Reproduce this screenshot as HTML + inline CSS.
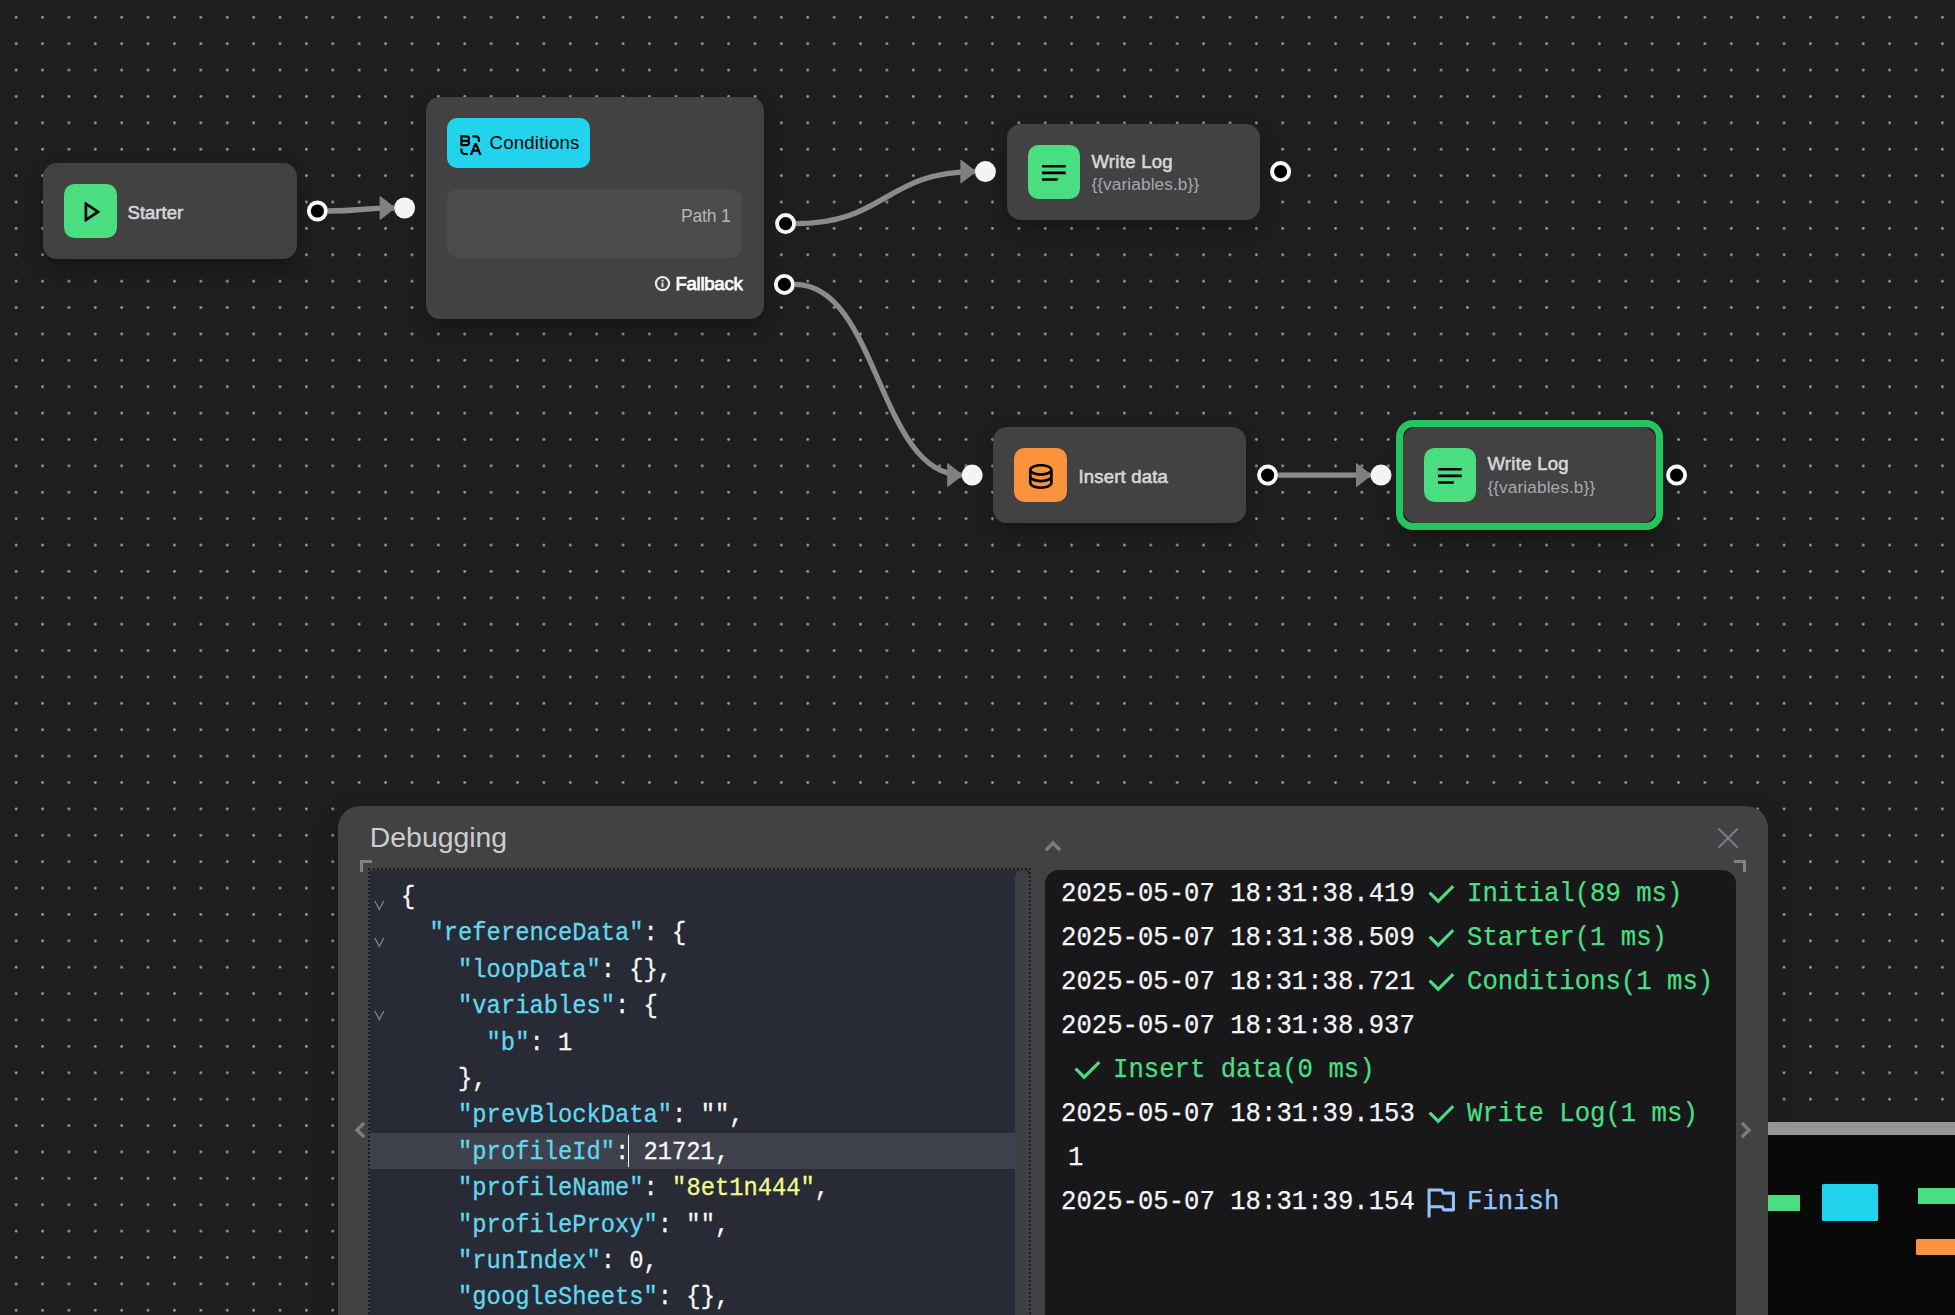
<!DOCTYPE html>
<html>
<head>
<meta charset="utf-8">
<title>Workflow Debugging</title>
<style>
*{box-sizing:border-box;margin:0;padding:0}
html,body{width:1955px;height:1315px;overflow:hidden;background:#1e1e1e;font-family:"Liberation Sans",sans-serif;}
#stage{position:absolute;left:0;top:0;width:1955px;height:1315px;overflow:hidden;background:#1e1e1e}
#bg{position:absolute;left:0;top:0}
.node{position:absolute;background:#424242;border-radius:14px;box-shadow:0 8px 18px rgba(0,0,0,.28)}
.ibox{position:absolute;border-radius:10.5px;width:52.8px;height:54px}
.ibox svg{position:absolute;left:10.6px;top:12px;width:31.7px;height:31.7px}
.ttl{position:absolute;white-space:nowrap;font-size:18.5px;line-height:22px;color:#d6d6d9;-webkit-text-stroke:.6px #d6d6d9}
.sub{position:absolute;white-space:nowrap;font-size:17.2px;line-height:22px;color:#a3a9b3}
.abs{position:absolute}
/* panel */
#panel{position:absolute;left:338px;top:806px;width:1430px;height:560px;background:#424242;border-radius:22px;box-shadow:0 6px 24px rgba(0,0,0,.22)}
#editor{position:absolute;left:368px;top:868px;width:663px;height:470px;border:2px dotted #1d1d1e;background:#282a36;background-clip:padding-box;overflow:hidden}
.cl{position:absolute;left:31.2px;-webkit-text-stroke:.3px;white-space:pre;font-family:"Liberation Mono",monospace;font-size:25px;line-height:36.4px;height:36.4px;color:#f8f8f2;transform:scaleX(.951);transform-origin:0 0}
.k{color:#62d8ee}.s{color:#f1fa8c}

#logs{position:absolute;left:1045px;top:870px;width:691px;height:470px;background:#18181b;border-radius:14px 14px 0 0;overflow:hidden}
.ll{position:absolute;white-space:pre;-webkit-text-stroke:.25px;font-family:"Liberation Mono",monospace;font-size:27.4px;line-height:44px;height:44px;color:#f4f4f5;transform:scaleX(.936);transform-origin:0 0}
.g{color:#4ade80}.b{color:#93c5fd}
</style>
</head>
<body>
<div id="stage">
<svg id="bg" width="1955" height="1315" viewBox="0 0 1955 1315">
<defs><pattern id="dots" x="2.956" y="4.157" width="26.387" height="26.387" patternUnits="userSpaceOnUse"><circle cx="13.194" cy="13.194" r="1.35" fill="#9c9ca6"/></pattern></defs>
<rect width="1955" height="1315" fill="#1e1e1e"/><rect width="1955" height="1315" fill="url(#dots)"/>
<path d="M327.9,211.0 C361.0,211.0 361.0,208.0 394.1,208.0" fill="none" stroke="#8b8b8d" stroke-width="5.3"/>
<path d="M796.1,223.6 C885.5,223.6 885.5,171.6 974.9,171.6" fill="none" stroke="#8b8b8d" stroke-width="5.3"/>
<path d="M794.9,284.4 C878.3,284.4 878.3,475.1 961.7,475.1" fill="none" stroke="#8b8b8d" stroke-width="5.3"/>
<path d="M1278.1,475.1 C1324.3,475.1 1324.3,475.1 1370.5,475.1" fill="none" stroke="#8b8b8d" stroke-width="5.3"/>
<path d="M380.1,196.5 L395.0,208.0 L380.1,219.5 Z" fill="#808080" stroke="#808080" stroke-width="1" stroke-linejoin="round"/>
<path d="M960.9,160.1 L975.8,171.6 L960.9,183.1 Z" fill="#808080" stroke="#808080" stroke-width="1" stroke-linejoin="round"/>
<path d="M947.7,463.6 L962.6,475.1 L947.7,486.6 Z" fill="#808080" stroke="#808080" stroke-width="1" stroke-linejoin="round"/>
<path d="M1356.5,463.6 L1371.4,475.1 L1356.5,486.6 Z" fill="#808080" stroke="#808080" stroke-width="1" stroke-linejoin="round"/>
</svg>

<!-- Starter -->
<div class="node" style="left:43px;top:163px;width:253.6px;height:96.4px">
  <div class="ibox" style="left:21px;top:21px;background:#4ade80"><svg style="left:10px;top:12.4px" viewBox="0 0 24 24"><path fill="#000" d="M16.394 12L10 7.737v8.526L16.394 12zm2.982.416L8.777 19.482A.5.5 0 0 1 8 19.066V4.934a.5.5 0 0 1 .777-.416l10.599 7.066a.5.5 0 0 1 0 .832z"/></svg></div>
  <div class="ttl" style="left:84.6px;top:38.6px">Starter</div>
</div>
<!-- Conditions -->
<div class="node" style="left:426px;top:97px;width:337.6px;height:221.6px">
  <div class="abs" style="left:21px;top:21px;width:143.2px;height:49.7px;border-radius:10px;background:#22d3ee">
    <svg class="abs" style="left:10.2px;top:14px;width:26.4px;height:26.4px" viewBox="0 0 24 24"><path fill="#000" d="M5 15v2a2 2 0 0 0 1.85 1.995L7 19h3v2H7a4 4 0 0 1-4-4v-2h2zm13-5l4.4 11h-2.155l-1.201-3h-4.09l-1.199 3h-2.154L16 10h2zm-1 2.885L15.753 16h2.492L17 12.885zM3 3h6a3 3 0 0 1 2.235 5A3 3 0 0 1 9 13H3V3zm6 6H5v2h4a1 1 0 0 0 0-2zm8-6a4 4 0 0 1 4 4v2h-2V7a2 2 0 0 0-2-2h-3V3h3zM9 5H5v2h4a1 1 0 1 0 0-2z"/></svg>
    <div class="abs" style="left:42.6px;top:14px;font-size:18.5px;line-height:22px;color:#000;white-space:nowrap;letter-spacing:.25px">Conditions</div>
  </div>
  <div class="abs" style="left:21px;top:92.4px;width:295px;height:68.6px;border-radius:10.5px;background:#4b4b4b">
    <div class="abs" style="right:11.4px;top:16.1px;font-size:17.6px;line-height:22px;letter-spacing:-.2px;color:#b3b3b8;white-space:nowrap">Path 1</div>
  </div>
  <svg class="abs" style="left:228px;top:178px;width:17px;height:17px" viewBox="0 0 17 17"><circle cx="8.5" cy="8.6" r="6.6" fill="none" stroke="#ececee" stroke-width="2.2"/><rect x="7.5" y="7.6" width="2" height="4.6" fill="#e4e4e7"/><rect x="7.5" y="4.7" width="2" height="1.9" fill="#e4e4e7"/></svg>
  <div class="abs" style="right:21.2px;top:175.9px;font-size:18.5px;line-height:22px;color:#fff;letter-spacing:-.25px;-webkit-text-stroke:.75px #fff;white-space:nowrap">Fallback</div>
</div>
<!-- Write Log 1 -->
<div class="node" style="left:1006.6px;top:123.6px;width:253px;height:96px">
  <div class="ibox" style="left:21px;top:21px;background:#4ade80"><svg viewBox="0 0 24 24"><path fill="#000" d="M3 18h12v-2H3v2zM3 6v2h18V6H3zm0 7h18v-2H3v2z"/></svg></div>
  <div class="ttl" style="left:84.8px;top:27.1px;letter-spacing:.3px">Write Log</div>
  <div class="sub" style="left:84.8px;top:49.5px;letter-spacing:.12px">{{variables.b}}</div>
</div>
<!-- Insert data -->
<div class="node" style="left:993.4px;top:427px;width:253px;height:96px">
  <div class="ibox" style="left:21px;top:21px;background:#fb923c"><svg viewBox="0 0 24 24"><path fill="#000" d="M5 12.5c0 .313.461.858 1.53 1.393C7.914 14.585 9.877 15 12 15c2.123 0 4.086-.415 5.47-1.107 1.069-.535 1.53-1.08 1.53-1.393v-2.171C17.35 11.349 14.827 12 12 12s-5.35-.652-7-1.671V12.5zm14 2.829C17.35 16.349 14.827 17 12 17s-5.35-.652-7-1.671V17.5c0 .313.461.858 1.53 1.393C7.914 19.585 9.877 20 12 20c2.123 0 4.086-.415 5.47-1.107 1.069-.535 1.53-1.08 1.53-1.393v-2.171zM3 17.5v-10C3 5.015 7.03 3 12 3s9 2.015 9 4.5v10c0 2.485-4.03 4.5-9 4.5s-9-2.015-9-4.5zm9-7.500c2.123 0 4.086-.415 5.47-1.107C18.539 8.358 19 7.813 19 7.5c0-.313-.461-.858-1.53-1.393C16.086 5.415 14.123 5 12 5c-2.123 0-4.086.415-5.47 1.107C5.461 6.642 5 7.187 5 7.5c0 .313.461.858 1.53 1.393C7.914 9.585 9.877 10 12 10z"/></svg></div>
  <div class="ttl" style="left:85px;top:39.2px;letter-spacing:.2px">Insert data</div>
</div>
<!-- Write Log 2 (active) -->
<div class="abs" style="left:1395.6px;top:420px;width:267px;height:110px;border:7px solid #22c55e;border-radius:17px;background:#1a1a1a;box-shadow:0 13px 20px -4px rgba(0,0,0,.3)"></div>
<div class="node" style="left:1402.6px;top:427px;width:253px;height:96px;box-shadow:none">
  <div class="ibox" style="left:21px;top:21px;background:#4ade80"><svg viewBox="0 0 24 24"><path fill="#000" d="M3 18h12v-2H3v2zM3 6v2h18V6H3zm0 7h18v-2H3v2z"/></svg></div>
  <div class="ttl" style="left:84.8px;top:26px;letter-spacing:.3px">Write Log</div>
  <div class="sub" style="left:84.8px;top:49px;letter-spacing:.12px">{{variables.b}}</div>
</div>

<svg class="abs" style="left:0;top:0;pointer-events:none" width="1955" height="800" viewBox="0 0 1955 800">
<circle cx="317.4" cy="211" r="8.55" fill="#000" stroke="#f8f8f8" stroke-width="3.9"/>
<circle cx="404.6" cy="208" r="10.5" fill="#f4f4f5"/>
<circle cx="785.6" cy="223.6" r="8.55" fill="#000" stroke="#f8f8f8" stroke-width="3.9"/>
<circle cx="985.4" cy="171.6" r="10.5" fill="#f4f4f5"/>
<circle cx="784.4" cy="284.4" r="8.55" fill="#000" stroke="#f8f8f8" stroke-width="3.9"/>
<circle cx="972.2" cy="475.1" r="10.5" fill="#f4f4f5"/>
<circle cx="1267.6" cy="475.1" r="8.55" fill="#000" stroke="#f8f8f8" stroke-width="3.9"/>
<circle cx="1381" cy="475.1" r="10.5" fill="#f4f4f5"/>
<circle cx="1280.6" cy="171.6" r="8.55" fill="#000" stroke="#f8f8f8" stroke-width="3.9"/>
<circle cx="1676.6" cy="475.1" r="8.55" fill="#000" stroke="#f8f8f8" stroke-width="3.9"/>
</svg>
<div id="panel"></div>
<div class="abs" style="left:369.8px;top:820.8px;font-size:28.4px;line-height:32px;color:#cdcdd1;white-space:nowrap">Debugging</div>
<div class="abs" style="left:360px;top:860px;width:12px;height:12px;border-left:3.7px solid #838383;border-top:3.7px solid #838383"></div>
<div class="abs" style="left:1734px;top:860px;width:12px;height:12px;border-right:3.7px solid #838383;border-top:3.7px solid #838383"></div>
<svg class="abs" style="left:1040px;top:836px" width="26" height="20" viewBox="0 0 26 20"><path d="M5.9,14.2 L13,7 L20.1,14.2" fill="none" stroke="#7b7b7b" stroke-width="3.4"/></svg>
<svg class="abs" style="left:350px;top:1118px" width="20" height="26" viewBox="0 0 20 26"><path d="M14.2,4.9 L7,12 L14.2,19.1" fill="none" stroke="#7e7e7e" stroke-width="3.4"/></svg>
<svg class="abs" style="left:1736px;top:1118px" width="20" height="26" viewBox="0 0 20 26"><path d="M5.8,4.9 L13,12 L5.8,19.1" fill="none" stroke="#7b7b7b" stroke-width="3.4"/></svg>
<svg class="abs" style="left:1714px;top:824px" width="28" height="28" viewBox="0 0 28 28"><path d="M4.4,4.5 L23.8,23.7 M23.8,4.5 L4.4,23.7" fill="none" stroke="#747e90" stroke-width="1.9"/></svg>
<div id="editor">
<div class="abs" style="left:0;top:263px;width:661px;height:36.2px;background:#3f414d"></div>
<div class="abs" style="left:645px;top:0;width:14px;height:480px;background:#3e3f45;border-radius:7px 7px 0 0"></div>
<div class="cl" style="top:9.9px">{</div>
<div class="cl" style="top:46.3px">  <span class="k">"referenceData"</span>: {</div>
<div class="cl" style="top:82.7px">    <span class="k">"loopData"</span>: {},</div>
<div class="cl" style="top:119.1px">    <span class="k">"variables"</span>: {</div>
<div class="cl" style="top:155.5px">      <span class="k">"b"</span>: 1</div>
<div class="cl" style="top:191.9px">    },</div>
<div class="cl" style="top:228.3px">    <span class="k">"prevBlockData"</span>: "",</div>
<div class="cl" style="top:264.7px">    <span class="k">"profileId"</span>: 21721,</div>
<div class="cl" style="top:301.1px">    <span class="k">"profileName"</span>: <span class="s">"8et1n444"</span>,</div>
<div class="cl" style="top:337.5px">    <span class="k">"profileProxy"</span>: "",</div>
<div class="cl" style="top:373.9px">    <span class="k">"runIndex"</span>: 0,</div>
<div class="cl" style="top:410.3px">    <span class="k">"googleSheets"</span>: {},</div>
<svg class="abs" style="left:3px;top:29.4px" width="14" height="13" viewBox="0 0 14 13"><path d="M1.8,2 L6.3,10.4 L10.8,2" fill="none" stroke="#6c8c90" stroke-width="1.3"/></svg>
<svg class="abs" style="left:3px;top:65.8px" width="14" height="13" viewBox="0 0 14 13"><path d="M1.8,2 L6.3,10.4 L10.8,2" fill="none" stroke="#6c8c90" stroke-width="1.3"/></svg>
<svg class="abs" style="left:3px;top:138.6px" width="14" height="13" viewBox="0 0 14 13"><path d="M1.8,2 L6.3,10.4 L10.8,2" fill="none" stroke="#6c8c90" stroke-width="1.3"/></svg>
<div class="abs" style="left:257.5px;top:265px;width:1.7px;height:32px;background:#f8f8f2"></div>
</div>
<div id="logs">
<div class="ll" style="left:15.9px;top:2.0px">2025-05-07 18:31:38.419</div>
<svg class="abs" style="left:377.5px;top:5.8px" width="36.5" height="36.5" viewBox="0 0 24 24"><path fill="#4ade80" d="M10 15.172l9.192-9.193 1.415 1.414L10 18l-6.364-6.364 1.414-1.414z"/></svg>
<div class="ll g" style="left:422.1px;top:2.0px">Initial(89 ms)</div>
<div class="ll" style="left:15.9px;top:46.0px">2025-05-07 18:31:38.509</div>
<svg class="abs" style="left:377.5px;top:49.8px" width="36.5" height="36.5" viewBox="0 0 24 24"><path fill="#4ade80" d="M10 15.172l9.192-9.193 1.415 1.414L10 18l-6.364-6.364 1.414-1.414z"/></svg>
<div class="ll g" style="left:422.1px;top:46.0px">Starter(1 ms)</div>
<div class="ll" style="left:15.9px;top:90.0px">2025-05-07 18:31:38.721</div>
<svg class="abs" style="left:377.5px;top:93.8px" width="36.5" height="36.5" viewBox="0 0 24 24"><path fill="#4ade80" d="M10 15.172l9.192-9.193 1.415 1.414L10 18l-6.364-6.364 1.414-1.414z"/></svg>
<div class="ll g" style="left:422.1px;top:90.0px">Conditions(1 ms)</div>
<div class="ll" style="left:15.9px;top:134.0px">2025-05-07 18:31:38.937</div>
<svg class="abs" style="left:23.7px;top:181.8px" width="36.5" height="36.5" viewBox="0 0 24 24"><path fill="#4ade80" d="M10 15.172l9.192-9.193 1.415 1.414L10 18l-6.364-6.364 1.414-1.414z"/></svg>
<div class="ll g" style="left:68.3px;top:178.0px">Insert data(0 ms)</div>
<div class="ll" style="left:15.9px;top:222.0px">2025-05-07 18:31:39.153</div>
<svg class="abs" style="left:377.5px;top:225.8px" width="36.5" height="36.5" viewBox="0 0 24 24"><path fill="#4ade80" d="M10 15.172l9.192-9.193 1.415 1.414L10 18l-6.364-6.364 1.414-1.414z"/></svg>
<div class="ll g" style="left:422.1px;top:222.0px">Write Log(1 ms)</div>
<div class="ll" style="left:23.0px;top:266.0px">1</div>
<div class="ll" style="left:15.9px;top:310.0px">2025-05-07 18:31:39.154</div>
<svg class="abs" style="left:377.5px;top:313.8px" width="36.5" height="36.5" viewBox="0 0 24 24"><path fill="#93c5fd" d="M12.382 3a1 1 0 0 1 .894.553L14 5h6a1 1 0 0 1 1 1v11a1 1 0 0 1-1 1h-6.382a1 1 0 0 1-.894-.553L12 16H5v6H3V3h9.382zm-.618 2H5v9h8.236l1 2H19V7h-6.236l-1-2z"/></svg>
<div class="ll b" style="left:422.1px;top:310.0px">Finish</div>
</div>
<div class="abs" style="left:1768px;top:1122px;width:187px;height:13px;background:#959595"></div>
<div class="abs" style="left:1768px;top:1135px;width:187px;height:180px;background:#090909"></div>
<div class="abs" style="left:1768px;top:1195px;width:32px;height:16px;background:#4ade80"></div>
<div class="abs" style="left:1822px;top:1184px;width:56px;height:37px;background:#22d3ee;border-radius:1.5px"></div>
<div class="abs" style="left:1918px;top:1188px;width:37px;height:16px;background:#4ade80"></div>
<div class="abs" style="left:1916px;top:1239px;width:39px;height:16px;background:#fb923c;border-radius:1.5px 0 0 1.5px"></div>
</div>
</body>
</html>
